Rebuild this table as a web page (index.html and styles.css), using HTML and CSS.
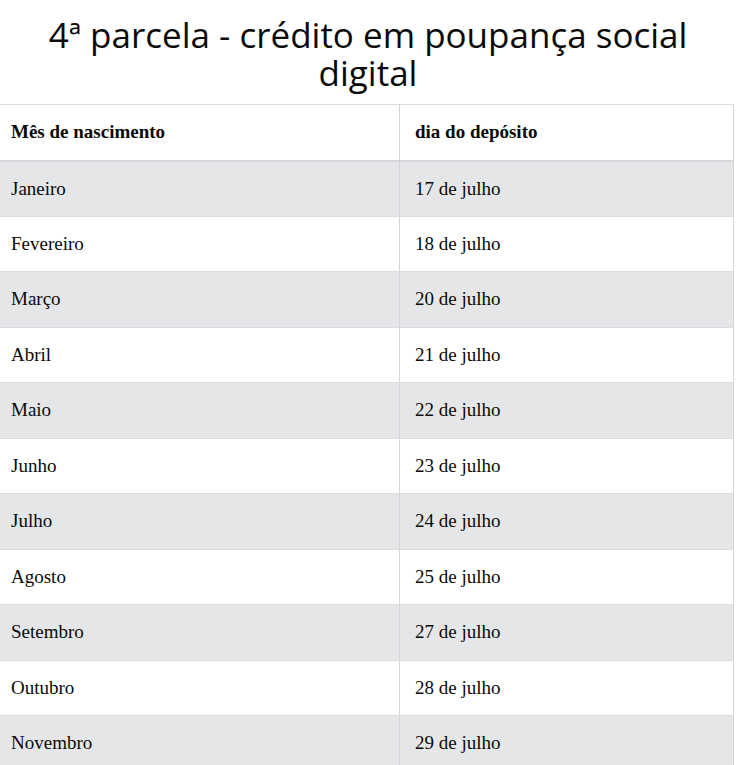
FILE: index.html
```html
<!DOCTYPE html>
<html lang="pt">
<head>
<meta charset="utf-8">
<link rel="stylesheet" href="styles.css">
</head>
<body>
<h1 class="title">4ª parcela - crédito em poupança social digital</h1>
<table class="schedule">
  <thead>
    <tr><th>Mês de nascimento</th><th>dia do depósito</th></tr>
  </thead>
  <tbody>
    <tr><td>Janeiro</td><td>17 de julho</td></tr>
    <tr><td>Fevereiro</td><td>18 de julho</td></tr>
    <tr><td>Março</td><td>20 de julho</td></tr>
    <tr><td>Abril</td><td>21 de julho</td></tr>
    <tr><td>Maio</td><td>22 de julho</td></tr>
    <tr><td>Junho</td><td>23 de julho</td></tr>
    <tr><td>Julho</td><td>24 de julho</td></tr>
    <tr><td>Agosto</td><td>25 de julho</td></tr>
    <tr><td>Setembro</td><td>27 de julho</td></tr>
    <tr><td>Outubro</td><td>28 de julho</td></tr>
    <tr><td>Novembro</td><td>29 de julho</td></tr>
  </tbody>
</table>
</body>
</html>
```
FILE: styles.css
```css
html, body {
  margin: 0;
  padding: 0;
  background: #fff;
}
.title {
  font-family: "Open Sans", sans-serif;
  font-weight: 400;
  font-size: 35px;
  line-height: 38px;
  color: #0a0a0a;
  text-align: center;
  margin: 16px 40px 12px;
}
.schedule {
  width: 734px;
  border-collapse: collapse;
  font-family: "Liberation Serif", serif;
  font-size: 19px;
  color: #0a0a0a;
}
.schedule tr {
  height: 55.5px;
}
.schedule th,
.schedule td {
  text-align: left;
  padding: 0 11px;
  border-top: 1px solid #dcdde0;
  border-bottom: 1px solid #dcdde0;
  border-right: 1px solid #d4d6d9;
}
.schedule th:first-child,
.schedule td:first-child {
  width: 377px;
  padding-left: 11px;
}
.schedule td + td,
.schedule th + th {
  padding-left: 15px;
  border-left: 1px solid #d4d6d9;
}
.schedule thead tr {
  height: 56px;
}
.schedule th {
  font-weight: 700;
  border-bottom: 2px solid #d4d6d9;
}
.schedule tbody tr:nth-child(odd) {
  background: #e5e6e8;
}
```
